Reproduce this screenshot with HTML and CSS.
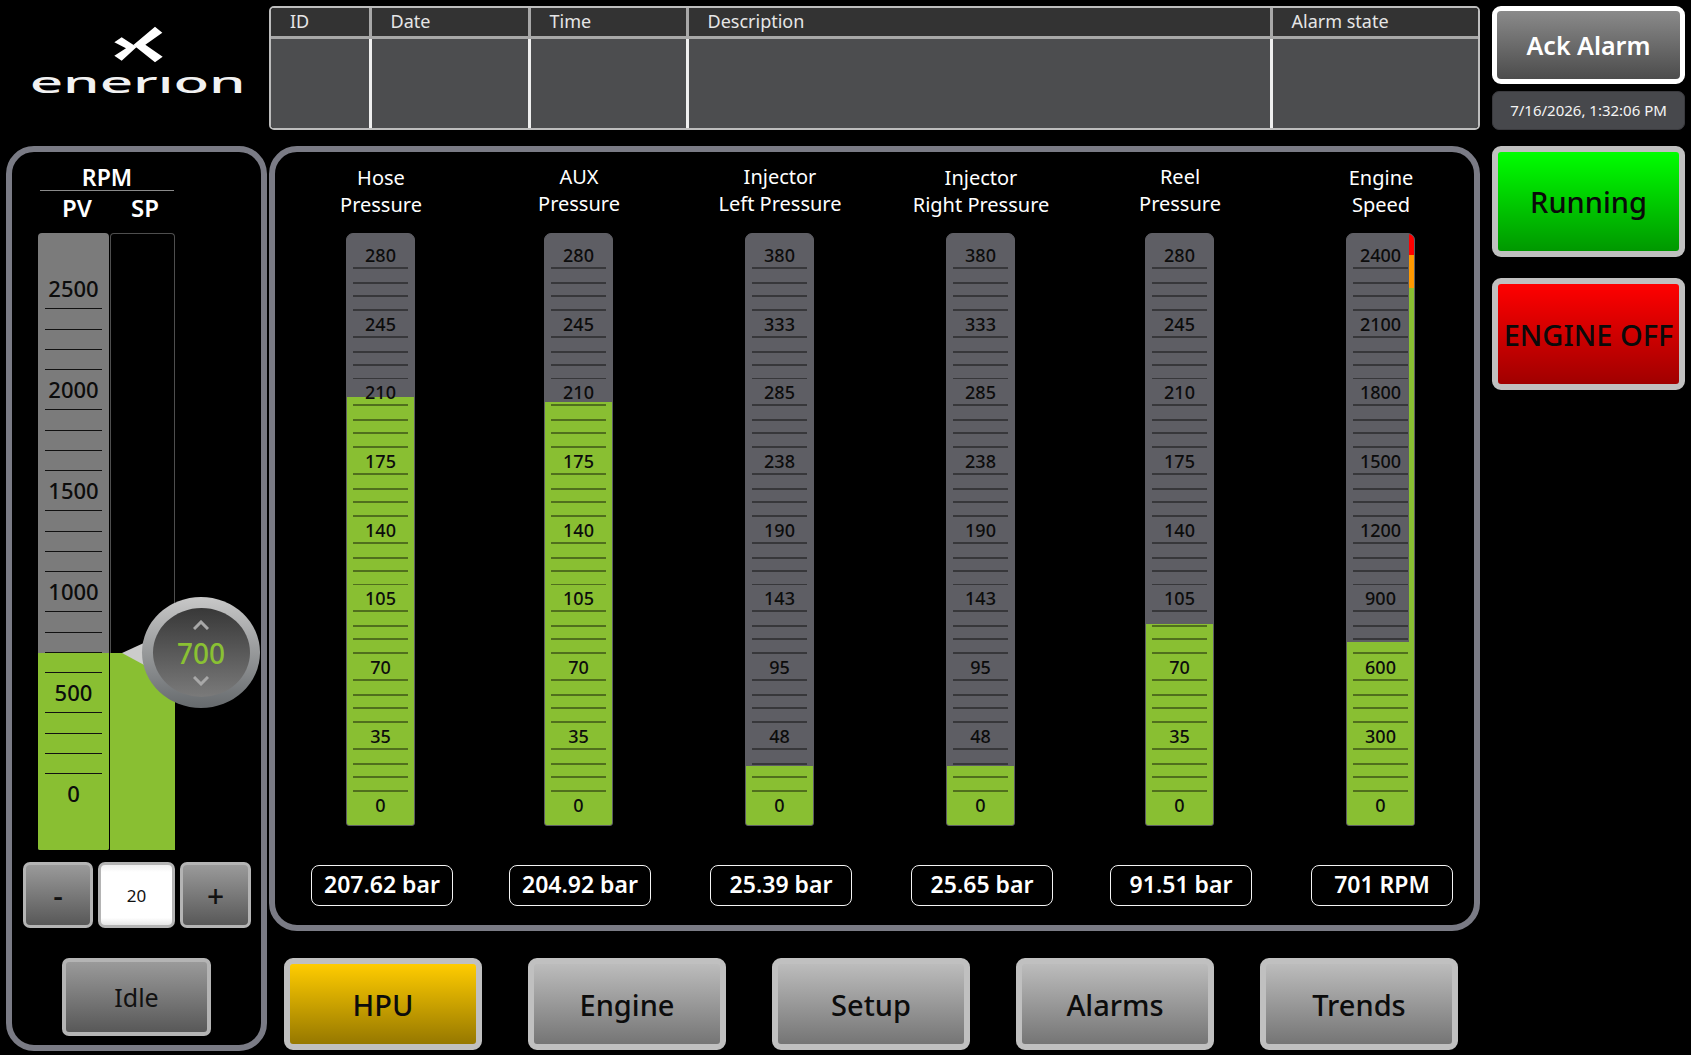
FILE: index.html
```html
<!DOCTYPE html>
<html lang="en">
<head>
  <meta charset="UTF-8" />
  <title>HPU</title>
  <link rel="stylesheet" href="styles.css">
</head>
<body>
  <div class="screen">
    <div class="left-col">
      <div class="logo">
        <svg viewBox="0 0 720 270" width="240" height="90">
          <clipPath id="wordClip"><rect x="0" y="186" width="720" height="60" /></clipPath>
          <polygon class="logo-mark" points="405,35 427,53 376,89 428,125 405,142 340,90" />
          <polygon class="logo-mark" points="283,82 305,67 350,96 305,137 283,122 318,100" />
          <text class="logo-word" x="29" y="235" font-size="88" textLength="648" lengthAdjust="spacingAndGlyphs" clip-path="url(#wordClip)">enerion</text>
        </svg>
      </div>

      <div class="panel rpm-panel">
        <div class="rpm-head">RPM</div>
        <div class="rpm-sub"><span>PV</span><span>SP</span></div>

        <div class="rpm-gauges">
          <div class="bar rpm-bar">
            <div class="fill" style="height: 197px"></div>
            <div class="scale">
              <div class="step"><span>2500</span></div>
              <div class="step"><span>2000</span></div>
              <div class="step"><span>1500</span></div>
              <div class="step"><span>1000</span></div>
              <div class="step"><span>500</span></div>
              <div class="step"><span>0</span></div>
            </div>
          </div>
          <div class="sp-bar">
            <div class="fill" style="height: 197px"></div>
          </div>
          <div class="knob-pointer"></div>
          <div class="knob">
            <div class="knob-face">
              <svg class="chevron" viewBox="0 0 16 10" width="16" height="10"><polyline points="1,9 8,2 15,9" /></svg>
              <span class="knob-value">700</span>
              <svg class="chevron" viewBox="0 0 16 10" width="16" height="10"><polyline points="1,1 8,8 15,1" /></svg>
            </div>
          </div>
        </div>

        <div class="stepper">
          <button class="btn step-minus">-</button>
          <div class="step-value">20</div>
          <button class="btn step-plus">+</button>
        </div>
        <button class="btn idle-btn">Idle</button>
      </div>
    </div>

    <div class="center-col">
      <div class="alarm-table-wrap">
        <table class="alarm-table">
          <colgroup>
            <col class="col-id"><col class="col-date"><col class="col-time"><col class="col-desc"><col>
          </colgroup>
          <thead>
            <tr><th>ID</th><th>Date</th><th>Time</th><th>Description</th><th>Alarm state</th></tr>
          </thead>
          <tbody>
            <tr><td></td><td></td><td></td><td></td><td></td></tr>
            <tr><td></td><td></td><td></td><td></td><td></td></tr>
            <tr><td></td><td></td><td></td><td></td><td></td></tr>
          </tbody>
        </table>
      </div>

      <div class="panel main-panel">
        <div class="gauge-col">
          <div class="gauge-title low">Hose<br>Pressure</div>
          <div class="bar">
            <div class="fill" style="height: 428px"></div>
            <div class="scale">
              <div class="step"><span>280</span></div>
              <div class="step"><span>245</span></div>
              <div class="step"><span>210</span></div>
              <div class="step"><span>175</span></div>
              <div class="step"><span>140</span></div>
              <div class="step"><span>105</span></div>
              <div class="step"><span>70</span></div>
              <div class="step"><span>35</span></div>
              <div class="step"><span>0</span></div>
            </div>
          </div>
          <div class="gauge-value">207.62 bar</div>
        </div>

        <div class="gauge-col">
          <div class="gauge-title">AUX<br>Pressure</div>
          <div class="bar">
            <div class="fill" style="height: 423px"></div>
            <div class="scale">
              <div class="step"><span>280</span></div>
              <div class="step"><span>245</span></div>
              <div class="step"><span>210</span></div>
              <div class="step"><span>175</span></div>
              <div class="step"><span>140</span></div>
              <div class="step"><span>105</span></div>
              <div class="step"><span>70</span></div>
              <div class="step"><span>35</span></div>
              <div class="step"><span>0</span></div>
            </div>
          </div>
          <div class="gauge-value">204.92 bar</div>
        </div>

        <div class="gauge-col">
          <div class="gauge-title">Injector<br>Left Pressure</div>
          <div class="bar">
            <div class="fill" style="height: 59px"></div>
            <div class="scale">
              <div class="step"><span>380</span></div>
              <div class="step"><span>333</span></div>
              <div class="step"><span>285</span></div>
              <div class="step"><span>238</span></div>
              <div class="step"><span>190</span></div>
              <div class="step"><span>143</span></div>
              <div class="step"><span>95</span></div>
              <div class="step"><span>48</span></div>
              <div class="step"><span>0</span></div>
            </div>
          </div>
          <div class="gauge-value">25.39 bar</div>
        </div>

        <div class="gauge-col">
          <div class="gauge-title low">Injector<br>Right Pressure</div>
          <div class="bar">
            <div class="fill" style="height: 59px"></div>
            <div class="scale">
              <div class="step"><span>380</span></div>
              <div class="step"><span>333</span></div>
              <div class="step"><span>285</span></div>
              <div class="step"><span>238</span></div>
              <div class="step"><span>190</span></div>
              <div class="step"><span>143</span></div>
              <div class="step"><span>95</span></div>
              <div class="step"><span>48</span></div>
              <div class="step"><span>0</span></div>
            </div>
          </div>
          <div class="gauge-value">25.65 bar</div>
        </div>

        <div class="gauge-col">
          <div class="gauge-title">Reel<br>Pressure</div>
          <div class="bar">
            <div class="fill" style="height: 201px"></div>
            <div class="scale">
              <div class="step"><span>280</span></div>
              <div class="step"><span>245</span></div>
              <div class="step"><span>210</span></div>
              <div class="step"><span>175</span></div>
              <div class="step"><span>140</span></div>
              <div class="step"><span>105</span></div>
              <div class="step"><span>70</span></div>
              <div class="step"><span>35</span></div>
              <div class="step"><span>0</span></div>
            </div>
          </div>
          <div class="gauge-value">91.51 bar</div>
        </div>

        <div class="gauge-col">
          <div class="gauge-title low">Engine<br>Speed</div>
          <div class="bar">
            <div class="fill" style="height: 183px"></div>
            <div class="scale">
              <div class="step"><span>2400</span></div>
              <div class="step"><span>2100</span></div>
              <div class="step"><span>1800</span></div>
              <div class="step"><span>1500</span></div>
              <div class="step"><span>1200</span></div>
              <div class="step"><span>900</span></div>
              <div class="step"><span>600</span></div>
              <div class="step"><span>300</span></div>
              <div class="step"><span>0</span></div>
            </div>
            <div class="limit-strip">
              <div class="limit-red"></div>
              <div class="limit-orange"></div>
              <div class="limit-green"></div>
            </div>
          </div>
          <div class="gauge-value">701 RPM</div>
        </div>
      </div>

      <div class="nav">
        <button class="nav-btn active">HPU</button>
        <button class="nav-btn">Engine</button>
        <button class="nav-btn">Setup</button>
        <button class="nav-btn">Alarms</button>
        <button class="nav-btn">Trends</button>
      </div>
    </div>

    <div class="right-col">
      <button class="ack-btn">Ack Alarm</button>
      <div class="clock">7/16/2026, 1:32:06 PM</div>
      <div class="status running">Running</div>
      <div class="status engine-off">ENGINE OFF</div>
    </div>
  </div>
</body>
</html>
```

FILE: styles.css
```css
html, body {
  margin: 0;
  padding: 0;
  background: #000;
}

body {
  width: 1691px;
  height: 1055px;
  overflow: hidden;
  font-family: 'Noto Sans', 'Open Sans', sans-serif;
  color: #fff;
}

button {
  font-family: inherit;
  cursor: pointer;
  padding: 0;
}

.screen {
  display: grid;
  grid-template-columns: 261px 1211px 193px;
  column-gap: 0;
  padding-left: 6px;
}

.left-col {
  display: flex;
  flex-direction: column;
}

.center-col {
  display: flex;
  flex-direction: column;
  margin-left: 2px;
  padding-top: 6px;
  width: 1211px;
}

.right-col {
  display: flex;
  flex-direction: column;
  margin-left: 14px;
  padding-top: 6px;
  width: 193px;
}

/* logo */
.logo {
  height: 146px;
  padding: 15px 0 0 14px;
  box-sizing: border-box;
}

.logo svg {
  display: block;
}

.logo-mark {
  fill: #fff;
}

.logo-word {
  fill: #f2f2f2;
  font-family: 'Noto Sans', sans-serif;
  font-weight: 500;
}

/* panels */
.panel {
  border: 6px solid #7a7b85;
  border-radius: 28px;
  box-sizing: border-box;
}

.rpm-panel {
  width: 261px;
  height: 905px;
}

.rpm-head {
  width: 134px;
  margin-left: 28px;
  height: 39px;
  box-sizing: border-box;
  padding-top: 10px;
  border-bottom: 1px solid #8a8a8a;
  text-align: center;
  font-size: 23px;
  line-height: 30px;
  font-weight: 600;
}

.rpm-sub {
  display: flex;
  height: 36px;
  margin-left: 31px;
  font-size: 24px;
  line-height: 34px;
  font-weight: 600;
}

.rpm-sub span {
  width: 68px;
  text-align: center;
}

.rpm-gauges {
  position: relative;
  display: flex;
  gap: 1px;
  margin: 6px 0 0 26px;
  width: 137px;
  height: 617px;
}

/* bars */
.bar {
  position: relative;
  width: 69px;
  height: 593px;
  box-sizing: border-box;
  background: #5e5e64;
  border: 1px solid #5e5e64;
  border-radius: 7px 7px 3px 3px;
  overflow: hidden;
}

.fill {
  position: absolute;
  left: 0;
  right: 0;
  bottom: 0;
  background: #89bf32;
}

.scale {
  position: relative;
  padding-top: 8px;
}

.step {
  --tick: rgba(0, 0, 0, 0.42);
  height: 68.7px;
  margin: 0 6px;
  text-align: center;
  font-size: 18px;
  line-height: 26px;
  font-weight: 500;
  color: #0c0c0c;
  background-image:
    linear-gradient(var(--tick), var(--tick)),
    linear-gradient(var(--tick), var(--tick)),
    linear-gradient(var(--tick), var(--tick)),
    linear-gradient(var(--tick), var(--tick));
  background-repeat: no-repeat;
  background-size: 100% 2px;
  background-position: 0 25px, 0 40px, 0 53px, 0 67px;
}

.step:last-child {
  height: 26px;
  background: none;
}

.rpm-bar {
  width: 71px;
  height: 617px;
  background: #7b7b7b;
  border: 0;
  border-radius: 4px 4px 2px 2px;
}

.rpm-bar .scale {
  padding-top: 40px;
}

.rpm-bar .step {
  --tick: #111;
  height: 101px;
  margin: 0 7px;
  font-size: 22px;
  line-height: 30px;
  background-size: 100% 1px;
  background-position: 0 35px, 0 56px, 0 76px, 0 96px;
}

.rpm-bar .step:last-child {
  height: 30px;
  background: none;
}

.sp-bar {
  position: relative;
  width: 65px;
  height: 617px;
  box-sizing: border-box;
  background: #000;
  border: 1px solid #4e4e4e;
  border-bottom: 0;
  border-radius: 4px 4px 0 0;
}

.sp-bar .fill {
  left: -1px;
  right: -1px;
}

.knob-pointer {
  position: absolute;
  left: 84px;
  top: 409px;
  width: 24px;
  height: 24px;
  background: #ccc;
  clip-path: polygon(0 46%, 100% 0, 100% 100%);
}

.knob {
  position: absolute;
  left: 104px;
  top: 364px;
  width: 118px;
  height: 111px;
  display: flex;
  align-items: center;
  justify-content: center;
  border-radius: 50%;
  background: linear-gradient(#c8c8c8, #666a6d);
}

.knob-face {
  width: 97px;
  height: 89px;
  display: flex;
  flex-direction: column;
  align-items: center;
  justify-content: center;
  gap: 5px;
  border-radius: 50%;
  background: linear-gradient(#383838, #7a7a7a);
}

.knob-value {
  font-size: 28px;
  line-height: 36px;
  font-weight: 500;
  color: #8ac133;
}

.chevron polyline {
  fill: none;
  stroke: #a8a8a8;
  stroke-width: 3;
}

/* buttons */
.btn {
  box-sizing: border-box;
  border: 3px solid #b4b4b4;
  border-radius: 7px;
  background: linear-gradient(#9a9a9a, #585858);
  color: #111;
}

.stepper {
  display: flex;
  gap: 5px;
  margin: 12px 0 0 11px;
  height: 66px;
}

.step-minus,
.step-plus {
  font-size: 30px;
  font-weight: 500;
}

.step-minus {
  width: 70px;
}

.step-plus {
  width: 71px;
}

.step-value {
  box-sizing: border-box;
  width: 77px;
  display: flex;
  align-items: center;
  justify-content: center;
  border: 3px solid #b4b4b4;
  border-radius: 7px;
  background: linear-gradient(#f0f0f0, #fff 12%, #fff 88%, #e4e4e4);
  color: #111;
  font-size: 17px;
}

.idle-btn {
  display: block;
  width: 149px;
  height: 78px;
  margin: 30px 0 0 50px;
  font-size: 25px;
  border-width: 4px;
}

/* alarm table */
.alarm-table-wrap {
  box-sizing: border-box;
  width: 1211px;
  height: 124px;
  border: 2px solid #bdbdbd;
  border-radius: 5px;
  overflow: hidden;
}

.alarm-table {
  width: 100%;
  height: 100%;
  table-layout: fixed;
  border-collapse: collapse;
}

.col-id { width: 99px; }
.col-date { width: 159px; }
.col-time { width: 158px; }
.col-desc { width: 584px; }

.alarm-table th {
  height: 29px;
  padding: 0 0 1px 19px;
  box-sizing: border-box;
  background: #333;
  border-right: 3px solid #a8a8a8;
  border-bottom: 3px solid #a8a8a8;
  text-align: left;
  font-size: 18px;
  font-weight: 400;
  color: #e6e6e6;
}

.alarm-table td {
  padding: 0;
  background: #4c4d4f;
  border-right: 3px solid #efefef;
}

.alarm-table tr:nth-child(2) td {
  background: #333436;
}

.alarm-table th:last-child,
.alarm-table td:last-child {
  border-right: 0;
}

/* main gauges */
.main-panel {
  display: flex;
  gap: 56px;
  width: 1211px;
  height: 785px;
  margin-top: 16px;
  padding-left: 36px;
}

.gauge-col {
  width: 142px;
  flex: none;
}

.gauge-col:nth-child(n+3) {
  margin-left: 3px;
}

.gauge-col:nth-child(4) {
  margin-left: 3px;
}

.gauge-col:nth-child(5) {
  margin-left: 1px;
}

.gauge-title {
  height: 81px;
  box-sizing: border-box;
  padding: 11px 2px 0 0;
  text-align: center;
  white-space: nowrap;
  font-size: 20px;
  line-height: 27px;
}

.gauge-title.low {
  padding-top: 12px;
}

.gauge-col .bar {
  margin-left: 35px;
}

.gauge-value {
  box-sizing: border-box;
  height: 41px;
  margin-top: 39px;
  border: 1.5px solid #f4f4f4;
  border-radius: 8px;
  text-align: center;
  font-size: 23px;
  line-height: 36px;
  font-weight: 600;
}

.limit-strip {
  position: absolute;
  top: 0;
  right: -1px;
  bottom: 0;
  width: 6px;
  display: flex;
  flex-direction: column;
}

.limit-red { height: 21px; background: #f00; }
.limit-orange { height: 33px; background: #f90; }
.limit-green { flex: 1; background: #89bf32; }

/* bottom nav */
.nav {
  display: flex;
  gap: 46px;
  margin: 27px 0 0 15px;
}

.nav-btn {
  box-sizing: border-box;
  width: 198px;
  height: 92px;
  border: 6px solid #c0c0c0;
  border-radius: 9px;
  background: linear-gradient(#bcbcbc, #757575);
  color: #0c0c0c;
  font-size: 29px;
  font-weight: 500;
}

.nav-btn.active {
  background: linear-gradient(#ffcc00, #967800);
}

/* right column */
.ack-btn {
  box-sizing: border-box;
  width: 193px;
  height: 78px;
  border: 5px solid #fff;
  border-radius: 9px;
  background: linear-gradient(#8a8a8a, #4c4c4c);
  color: #fff;
  font-size: 25px;
  font-weight: 600;
}

.clock {
  box-sizing: border-box;
  height: 39px;
  margin-top: 7px;
  border: 1px solid #3a3a3e;
  border-radius: 7px;
  background: #47484c;
  text-align: center;
  font-size: 15px;
  line-height: 37px;
  color: #f4f4f4;
}

.status {
  box-sizing: border-box;
  display: flex;
  align-items: center;
  justify-content: center;
  border: 6px solid #c0c0c0;
  border-radius: 9px;
  color: #0a0a0a;
  font-size: 29px;
  font-weight: 500;
  white-space: nowrap;
}

.running {
  height: 111px;
  margin-top: 16px;
  background: linear-gradient(#00ff00, #009800);
}

.engine-off {
  height: 112px;
  margin-top: 21px;
  background: linear-gradient(#ff0000, #a00000);
}
```
